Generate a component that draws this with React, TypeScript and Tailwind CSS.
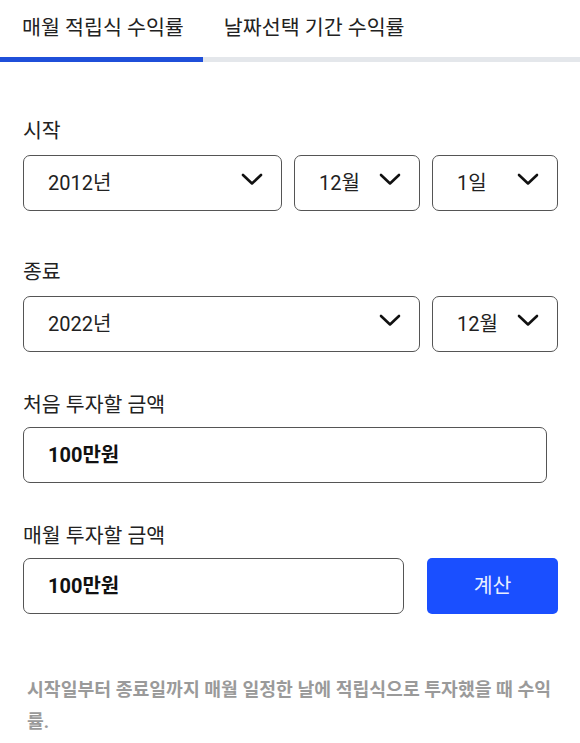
import React, { useState } from 'react';

const font = { fontFamily: 'Roboto, "Noto Sans CJK KR", "Noto Sans", sans-serif' };

function Chevron() {
  return (
    <svg width="22" height="13" viewBox="0 0 22 13" className="mb-[7px]">
      <polyline points="2,2 11,10.5 20,2" fill="none" stroke="#111" strokeWidth="2.6" strokeLinecap="round" strokeLinejoin="round" />
    </svg>
  );
}

function SelectBox({ value, className }: { value: string; className: string }) {
  return (
    <div className={`flex h-[56px] items-center justify-between rounded-[7px] border-[1.5px] border-[#555] pl-[24px] pr-[18px] ${className}`}>
      <span className="text-[20px] text-[#222]">{value}</span>
      <Chevron />
    </div>
  );
}

export default function App() {
  const [tab, setTab] = useState(0);
  const tabs = ['매월 적립식 수익률', '날짜선택 기간 수익률'];

  return (
    <div style={font} className="w-[580px] bg-white pb-6 text-[#222]">
      <div className="flex h-[57px] items-center">
        {tabs.map((t, i) => (
          <button
            key={t}
            onClick={() => setTab(i)}
            className={`text-[20.6px] text-[#222] ${i === 0 ? 'pl-[22px] pr-[40px]' : ''}`}
          >
            {t}
          </button>
        ))}
      </div>
      <div className="flex h-[5px]">
        <div className={`h-full w-[203px] ${tab === 0 ? 'bg-[#1f4fd9]' : 'bg-[#e4e7eb]'}`} />
        <div className={`h-full flex-1 ${tab === 1 ? 'bg-[#1f4fd9]' : 'bg-[#e4e7eb]'}`} />
      </div>

      <div className="pl-[23px] pr-[22px]">
        <div className="mt-[55px] text-[20.5px] leading-[28px]">시작</div>
        <div className="mt-[10px] flex gap-[12px]">
          <SelectBox value="2012년" className="w-[259px]" />
          <SelectBox value="12월" className="w-[126px]" />
          <SelectBox value="1일" className="w-[126px]" />
        </div>

        <div className="mt-[47px] text-[20.5px] leading-[28px]">종료</div>
        <div className="mt-[10px] flex gap-[12px]">
          <SelectBox value="2022년" className="w-[397px]" />
          <SelectBox value="12월" className="w-[126px]" />
        </div>

        <div className="mt-[39px] text-[20.5px] leading-[28px]">처음 투자할 금액</div>
        <div className="mt-[8px] flex h-[56px] w-[524px] items-center rounded-[7px] border-[1.5px] border-[#555] pl-[24px]">
          <span className="text-[20px] font-bold text-[#111]">100만원</span>
        </div>

        <div className="mt-[39px] text-[20.5px] leading-[28px]">매월 투자할 금액</div>
        <div className="mt-[8px] flex gap-[23px]">
          <div className="flex h-[56px] w-[381px] items-center rounded-[7px] border-[1.5px] border-[#555] pl-[24px]">
            <span className="text-[20px] font-bold text-[#111]">100만원</span>
          </div>
          <button className="h-[56px] w-[131px] rounded-[5px] bg-[#1a4fff] text-[20.5px] text-[#e8eeff]">계산</button>
        </div>

        <p className="mt-[60px] pl-[4px] text-[18.3px] font-bold leading-[32px] text-[#9a9a9a]">
          시작일부터 종료일까지 매월 일정한 날에 적립식으로 투자했을 때 수익률.
        </p>
      </div>
    </div>
  );
}
